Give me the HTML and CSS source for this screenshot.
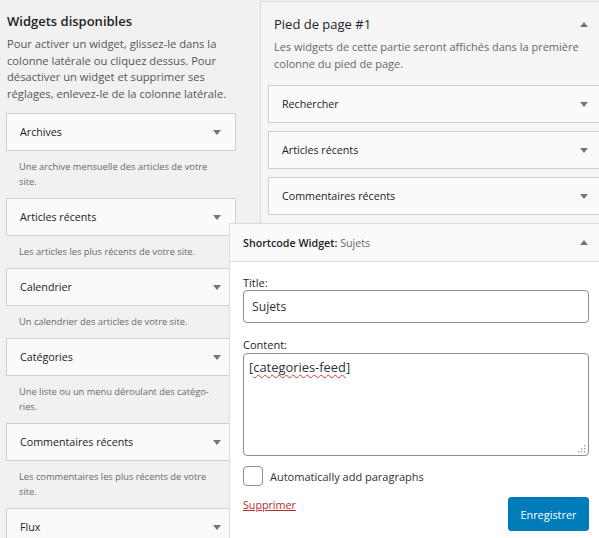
FILE: index.html
```html
<!DOCTYPE html>
<html lang="fr">
<head>
  <meta charset="UTF-8">
  <title>Widgets</title>
  <meta name="viewport" content="width=device-width, initial-scale=1.0">
  <link rel="stylesheet" href="styles.css">
</head>
<body>

<div class="screen">

  <!-- Available widgets -->
  <div class="available">
    <h2>Widgets disponibles</h2>
    <p class="intro">Pour activer un widget, glissez-le dans la colonne latérale ou cliquez dessus. Pour désactiver un widget et supprimer ses réglages, enlevez-le de la colonne latérale.</p>

    <div class="widget-top">
      <span>Archives</span>
      <svg class="arrow" width="8" height="5" viewBox="0 0 8 5"><path d="M0 0h8L4 5z"/></svg>
    </div>
    <p class="widget-desc">Une archive mensuelle des articles de votre site.</p>

    <div class="widget-top">
      <span>Articles récents</span>
      <svg class="arrow" width="8" height="5" viewBox="0 0 8 5"><path d="M0 0h8L4 5z"/></svg>
    </div>
    <p class="widget-desc">Les articles les plus récents de votre site.</p>

    <div class="widget-top">
      <span>Calendrier</span>
      <svg class="arrow" width="8" height="5" viewBox="0 0 8 5"><path d="M0 0h8L4 5z"/></svg>
    </div>
    <p class="widget-desc">Un calendrier des articles de votre site.</p>

    <div class="widget-top">
      <span>Catégories</span>
      <svg class="arrow" width="8" height="5" viewBox="0 0 8 5"><path d="M0 0h8L4 5z"/></svg>
    </div>
    <p class="widget-desc">Une liste ou un menu déroulant des catégo&shy;ries.</p>

    <div class="widget-top">
      <span>Commentaires récents</span>
      <svg class="arrow" width="8" height="5" viewBox="0 0 8 5"><path d="M0 0h8L4 5z"/></svg>
    </div>
    <p class="widget-desc">Les commentaires les plus récents de votre site.</p>

    <div class="widget-top">
      <span>Flux</span>
      <svg class="arrow" width="8" height="5" viewBox="0 0 8 5"><path d="M0 0h8L4 5z"/></svg>
    </div>
  </div>

  <!-- Footer sidebar -->
  <div class="sidebar">
    <div class="sidebar-name">
      <h2>Pied de page #1</h2>
      <svg class="arrow" width="8" height="5" viewBox="0 0 8 5"><path d="M0 5h8L4 0z"/></svg>
    </div>
    <p class="sidebar-desc">Les widgets de cette partie seront affichés dans la première colonne du pied de page.</p>

    <div class="sortables">
      <div class="widget-top">
        <span>Rechercher</span>
        <svg class="arrow" width="8" height="5" viewBox="0 0 8 5"><path d="M0 0h8L4 5z"/></svg>
      </div>
      <div class="widget-top">
        <span>Articles récents</span>
        <svg class="arrow" width="8" height="5" viewBox="0 0 8 5"><path d="M0 0h8L4 5z"/></svg>
      </div>
      <div class="widget-top">
        <span>Commentaires récents</span>
        <svg class="arrow" width="8" height="5" viewBox="0 0 8 5"><path d="M0 0h8L4 5z"/></svg>
      </div>

      <div class="widget open">
        <div class="widget-top">
          <span class="widget-title">Shortcode Widget:<span class="in-title"> Sujets</span></span>
          <svg class="arrow" width="8" height="5" viewBox="0 0 8 5"><path d="M0 5h8L4 0z"/></svg>
        </div>
        <div class="widget-inside">
          <label class="field-label" for="title">Title:</label>
          <input class="field" id="title" type="text" value="Sujets">

          <label class="field-label content-label">Content:</label>
          <div class="textarea">[<span class="typo">categories-feed</span>]<svg class="grip" width="9" height="9" viewBox="0 0 9 9"><rect x="7" y="1" width="1.5" height="1.5"/><rect x="4" y="4" width="1.5" height="1.5"/><rect x="7" y="4" width="1.5" height="1.5"/><rect x="1" y="7" width="1.5" height="1.5"/><rect x="4" y="7" width="1.5" height="1.5"/><rect x="7" y="7" width="1.5" height="1.5"/></svg></div>

          <label class="check"><input type="checkbox"> Automatically add paragraphs</label>

          <div class="actions">
            <a href="#" class="delete">Supprimer</a>
            <button class="save">Enregistrer</button>
          </div>
        </div>
      </div>
    </div>
  </div>

</div>

</body>
</html>
```

FILE: styles.css
```css
html, body {
  margin: 0;
  padding: 0;
  overflow: hidden;
}
body {
  background: #f1f1f1;
  font-family: 'Open Sans', sans-serif;
  color: #1d2327;
}
.screen {
  display: flex;
  align-items: flex-start;
  gap: 24px;
  height: 100vh;
  overflow: hidden;
  padding-left: 6px;
}

/* left column */
.available {
  flex: none;
  width: 230px;
}
.available h2 {
  margin: 11px 0 0 1px;
  font-size: 13px;
  font-weight: 600;
  line-height: 20px;
}
.intro {
  margin: 5px 0 11px 1px;
  font-size: 11.2px;
  line-height: 16.6px;
  color: #50575e;
}
.widget-top {
  display: flex;
  align-items: center;
  justify-content: space-between;
  box-sizing: border-box;
  height: 38px;
  padding: 0 14px 0 13px;
  background: #fafafa;
  border: 1px solid #ccd0d4;
  font-size: 10.7px;
}
.widget-desc {
  margin: 0;
  padding: 8px 16px 9px 13px;
  font-size: 9.3px;
  line-height: 15px;
  color: #646970;
}
.arrow {
  flex: none;
  fill: #72777c;
}

/* right sidebar */
.sidebar {
  flex: none;
  width: 351px;
  box-sizing: border-box;
  margin-top: 1px;
  padding: 0 7px 40px;
  background: #f5f5f5;
  border: 1px solid #dcdcde;
}
.sidebar-name {
  display: flex;
  align-items: center;
  justify-content: space-between;
  padding: 12px 15px 0 6px;
}
.sidebar-name h2 {
  margin: 0;
  font-size: 13px;
  font-weight: 400;
  line-height: 20px;
}
.sidebar-desc {
  margin: 4px 0 13px 6px;
  font-size: 11px;
  line-height: 17px;
  color: #646970;
}
.sortables .widget-top {
  margin-bottom: 8px;
}

/* expanded widget */
.widget.open {
  position: relative;
  margin-left: -39px;
  background: #fff;
  border: 1px solid #dcdcde;
}
.sortables .open .widget-top {
  height: 38px;
  margin: 0;
  border: 0;
  border-bottom: 1px solid #dcdcde;
  padding-left: 13px;
}
.widget-title {
  font-weight: 600;
}
.in-title {
  font-weight: 400;
  color: #646970;
}
.widget-inside {
  padding: 14px 13px 20px;
}
.field-label {
  display: block;
  font-size: 11px;
  line-height: 14px;
}
.content-label {
  margin-top: 15px;
}
.field {
  display: block;
  box-sizing: border-box;
  width: 100%;
  height: 33px;
  margin: 0;
  padding: 0 8px;
  border: 1px solid #8c8f94;
  border-radius: 4px;
  font-family: 'Open Sans', sans-serif;
  font-size: 12.2px;
  color: #2c3338;
}
.textarea {
  position: relative;
  box-sizing: border-box;
  height: 103px;
  margin-top: 1px;
  padding: 5px;
  border: 1px solid #8c8f94;
  border-radius: 4px;
  font-size: 12.9px;
  line-height: 17px;
  color: #2c3338;
}
.typo {
  text-decoration: underline wavy #d63638;
  text-decoration-thickness: 1px;
  text-underline-offset: 2px;
  text-decoration-skip-ink: none;
}
.grip {
  position: absolute;
  right: 2px;
  bottom: 2px;
  fill: #a7aaad;
}
.check {
  display: flex;
  align-items: center;
  gap: 7px;
  margin-top: 10px;
  font-size: 11px;
  color: #2c3338;
}
.check input {
  appearance: none;
  width: 20px;
  height: 20px;
  margin: 0;
  border: 1px solid #8c8f94;
  border-radius: 4px;
  background: #fff;
}
.actions {
  display: flex;
  justify-content: space-between;
  align-items: flex-start;
  margin-top: 11px;
}
.delete {
  font-size: 10.7px;
  line-height: 17px;
  color: #b32d2e;
}
.save {
  height: 34px;
  padding: 0 11.5px;
  background: #007cba;
  border: 1px solid #007cba;
  border-radius: 3px;
  color: #fff;
  font-family: 'Open Sans', sans-serif;
  font-size: 10.9px;
}
```
